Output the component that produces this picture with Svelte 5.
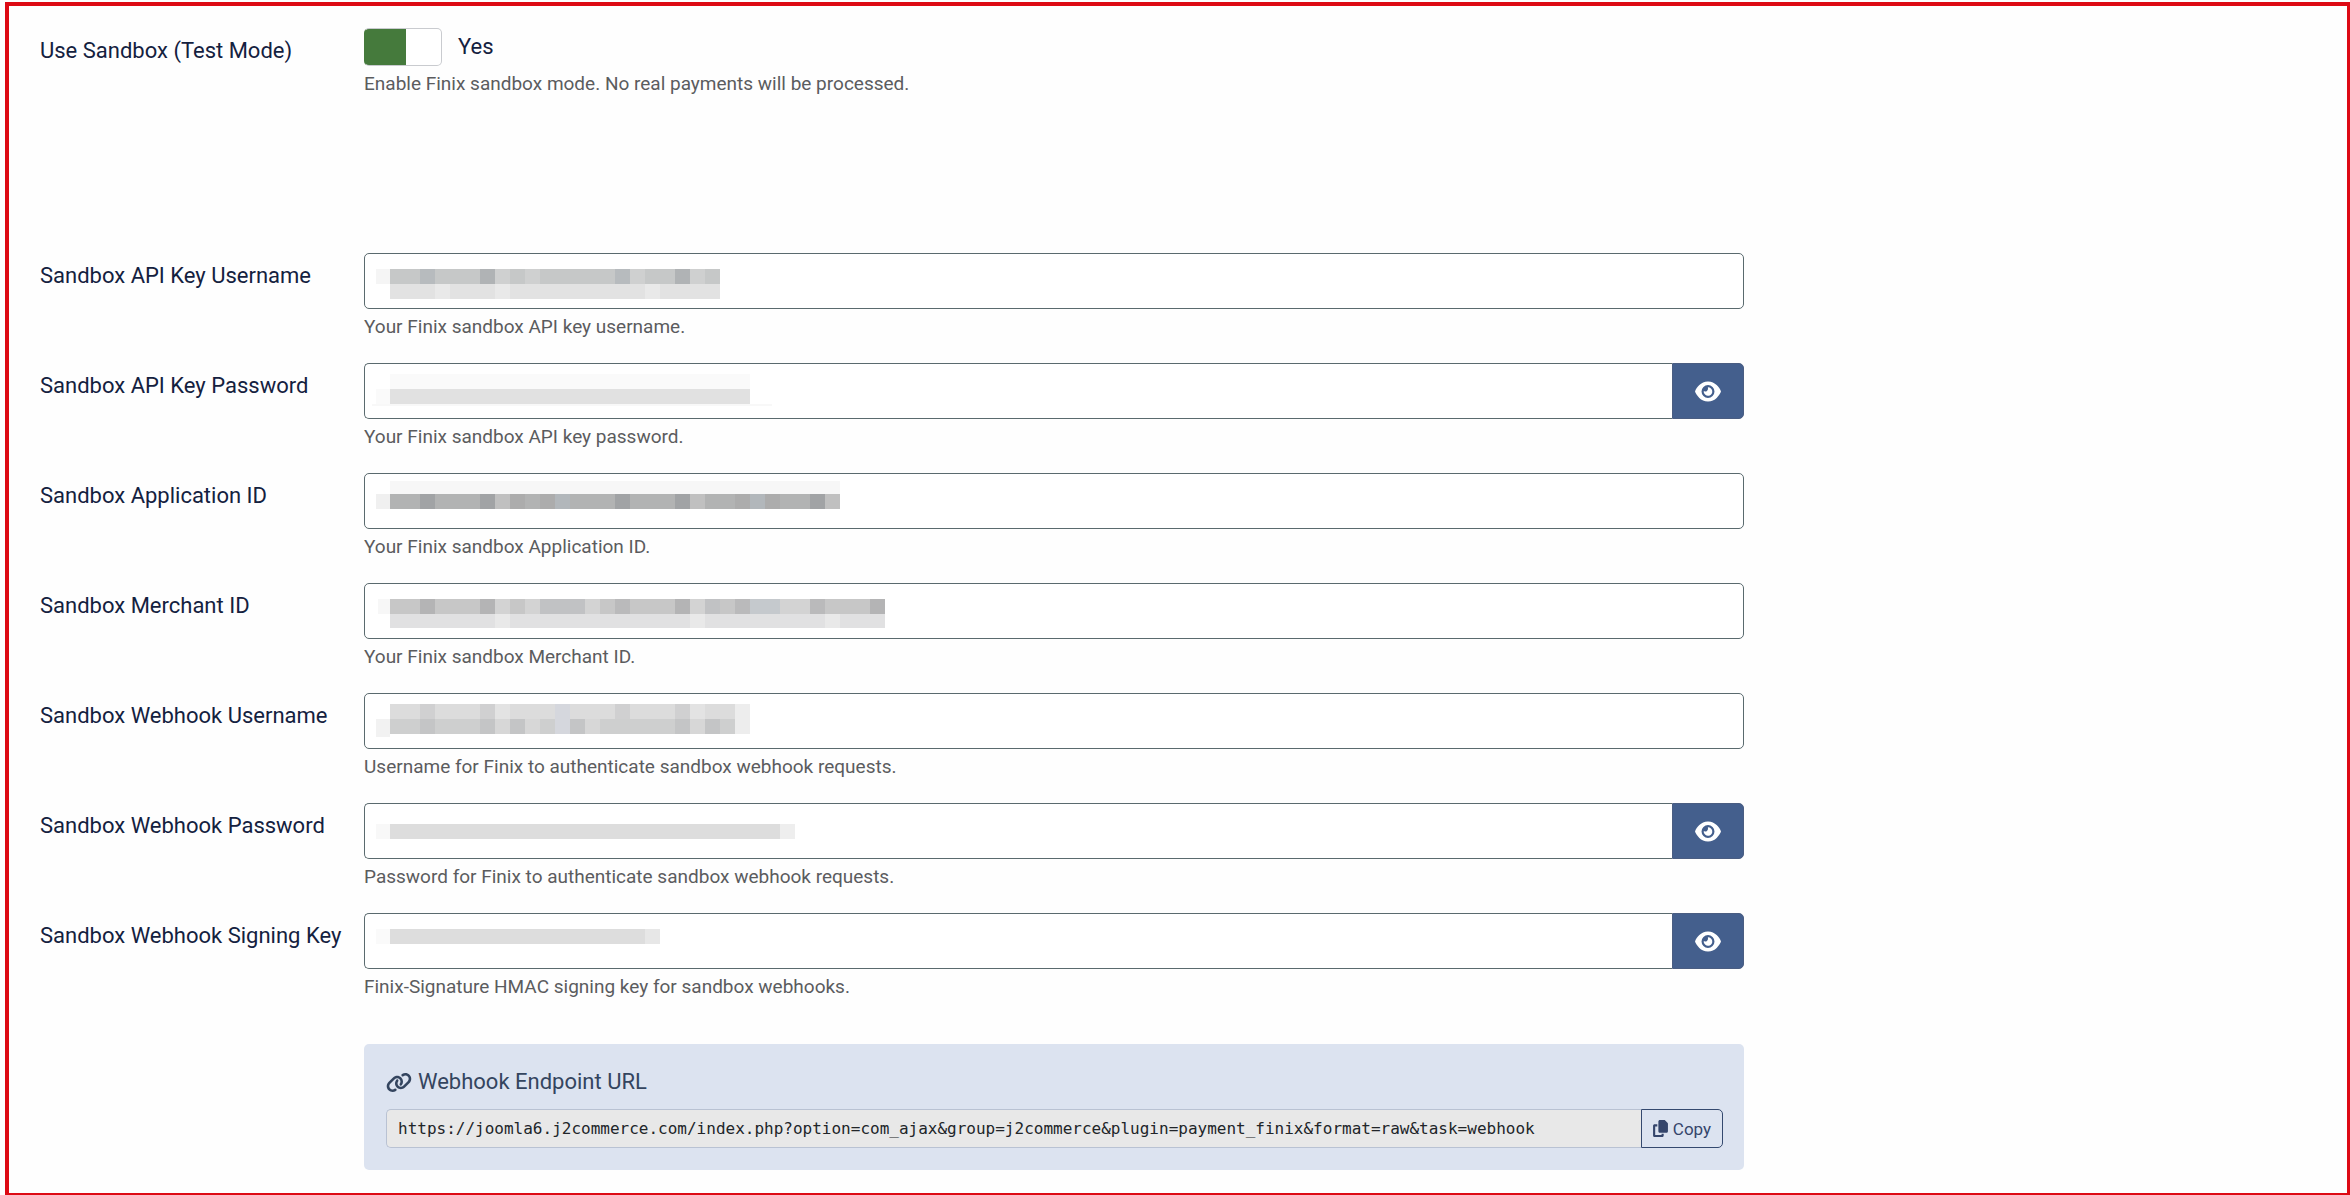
<script>
  let sandbox = $state(true);
  let copied = $state(false);
  let shown = $state({});

  const endpoint =
    'https://joomla6.j2commerce.com/index.php?option=com_ajax&group=j2commerce&plugin=payment_finix&format=raw&task=webhook';

  // Each mask is a list of tiles: [x, y, width, height, fill], relative to the field.
  const bar = (x, y, w, h, fill) => [x, y, w, h, fill];
  const tiles = (xs, y, h, fill) => xs.map((x) => [x, y, 15, h, fill]);

  const fields = [
    {
      id: 'api-user',
      label: 'Sandbox API Key Username',
      help: 'Your Finix sandbox API key username.',
      mask: [
        bar(12, 16, 14, 15, '#f5f5f5'),
        bar(26, 16, 330, 15, '#c6c8c8'),
        bar(26, 31, 330, 15, '#e2e2e2'),
        ...tiles([56, 251], 16, 15, '#b7bbbe'),
        ...tiles([116, 311], 16, 15, '#b0b3b5'),
        ...tiles([131, 161, 266, 326], 16, 15, '#cfd0d0'),
        ...tiles([71, 131, 281], 31, 15, '#e9e9e9')
      ]
    },
    {
      id: 'api-pass',
      label: 'Sandbox API Key Password',
      help: 'Your Finix sandbox API key password.',
      secret: true,
      mask: [
        bar(26, 11, 360, 15, '#fafafa'),
        bar(12, 26, 14, 15, '#fafafa'),
        bar(26, 26, 360, 15, '#e1e1e1'),
        bar(8, 41, 400, 2, '#f8f8f8')
      ]
    },
    {
      id: 'app-id',
      label: 'Sandbox Application ID',
      help: 'Your Finix sandbox Application ID.',
      mask: [
        bar(12, 21, 14, 15, '#f0f0f0'),
        bar(26, 8, 450, 13, '#f7f7f7'),
        bar(26, 21, 450, 15, '#b2b3b3'),
        ...tiles([56, 116, 251, 311, 446], 21, 15, '#a1a3a5'),
        ...tiles([131, 326, 461], 21, 15, '#c0c0c0'),
        ...tiles([146, 176, 371, 401], 21, 15, '#acacac'),
        ...tiles([191, 386], 21, 15, '#b2b7bb')
      ]
    },
    {
      id: 'merchant-id',
      label: 'Sandbox Merchant ID',
      help: 'Your Finix sandbox Merchant ID.',
      mask: [
        bar(14, 16, 12, 15, '#f7f7f7'),
        bar(26, 16, 495, 15, '#c7c7c7'),
        bar(26, 31, 495, 14, '#e1e1e2'),
        ...tiles([56, 116, 311, 506], 16, 15, '#b4b4b5'),
        ...tiles([251, 371, 446], 16, 15, '#bababb'),
        ...tiles([176, 191, 206, 341], 16, 15, '#c1c2c4'),
        ...tiles([386, 401], 16, 15, '#c5c9cd'),
        ...tiles([131, 161, 221, 326, 416, 431], 16, 15, '#d3d3d3'),
        ...tiles([131, 326, 461], 31, 14, '#e9e9e9')
      ]
    },
    {
      id: 'hook-user',
      label: 'Sandbox Webhook Username',
      help: 'Username for Finix to authenticate sandbox webhook requests.',
      mask: [
        bar(12, 26, 14, 18, '#f2f2f2'),
        bar(26, 11, 345, 15, '#dcdcdc'),
        bar(26, 26, 345, 15, '#cecfcf'),
        bar(371, 11, 15, 30, '#ededed'),
        ...tiles([56, 116, 251, 311], 11, 15, '#d0d0d1'),
        ...tiles([56, 116, 146, 206, 311, 341], 26, 15, '#c4c5c6'),
        ...tiles([131, 326], 11, 15, '#e3e3e3'),
        ...tiles([131, 161, 221, 326], 26, 15, '#d7d7d7'),
        bar(191, 11, 15, 30, '#d5d7dd')
      ]
    },
    {
      id: 'hook-pass',
      label: 'Sandbox Webhook Password',
      help: 'Password for Finix to authenticate sandbox webhook requests.',
      secret: true,
      mask: [
        bar(12, 21, 14, 15, '#f8f8f8'),
        bar(26, 21, 390, 15, '#dddddd'),
        bar(416, 21, 15, 15, '#eeeeee')
      ]
    },
    {
      id: 'hook-key',
      label: 'Sandbox Webhook Signing Key',
      help: 'Finix-Signature HMAC signing key for sandbox webhooks.',
      secret: true,
      mask: [
        bar(12, 16, 14, 15, '#fafafa'),
        bar(26, 16, 255, 15, '#dddddd'),
        bar(281, 16, 15, 15, '#e7e7e7')
      ]
    }
  ];

  function copy() {
    navigator.clipboard?.writeText(endpoint);
    copied = true;
  }
</script>

<main class="frame">
  <form class="form" onsubmit={(e) => e.preventDefault()}>
    <div class="row mode">
      <label class="label" for="sandbox">Use Sandbox (Test Mode)</label>
      <div class="control">
        <div class="switch-line">
          <input id="sandbox" class="switch" type="checkbox" role="switch" bind:checked={sandbox} aria-describedby="sandbox-help" />
          <span class="state">{sandbox ? 'Yes' : 'No'}</span>
        </div>
        <div class="help" id="sandbox-help">Enable Finix sandbox mode. No real payments will be processed.</div>
      </div>
    </div>

    {#each fields as f (f.id)}
      <div class="row">
        <label class="label" for={f.id}>{f.label}</label>
        <div class="control">
          <div class="group">
            <div class="field">
              <input
                id={f.id}
                class="input"
                class:joined={f.secret}
                type={f.secret && !shown[f.id] ? 'password' : 'text'}
                aria-describedby="{f.id}-help"
              />
              <svg class="mask" width="560" height="54" aria-hidden="true" shape-rendering="crispEdges">
                {#each f.mask as [x, y, w, h, fill]}
                  <rect {x} {y} width={w} height={h} {fill} />
                {/each}
              </svg>
            </div>
            {#if f.secret}
              <button class="reveal" type="button" aria-label="Show {f.label}" onclick={() => (shown[f.id] = !shown[f.id])}>
                <svg viewBox="0 0 576 512" width="26" height="23" fill="currentColor" aria-hidden="true">
                  <path d="M288 32c-80.8 0-145.5 36.8-192.6 80.6C48.6 156 17.3 208 2.5 243.7c-3.3 7.9-3.3 16.7 0 24.6C17.3 304 48.6 356 95.4 399.4C142.5 443.2 207.2 480 288 480s145.5-36.8 192.6-80.6c46.8-43.5 78.1-95.4 93-131.1c3.3-7.9 3.3-16.7 0-24.6c-14.9-35.7-46.2-87.7-93-131.1C433.5 68.8 368.8 32 288 32zM144 256a144 144 0 1 1 288 0 144 144 0 1 1 -288 0zm144-64c0 35.3-28.7 64-64 64c-7.1 0-13.9-1.2-20.3-3.3c-5.5-1.8-11.9 1.6-11.7 7.4c.3 6.9 1.3 13.8 3.2 20.7c13.7 51.2 66.4 81.6 117.6 67.9s81.6-66.4 67.9-117.6c-11.1-41.5-47.8-69.4-88.6-71.1c-5.8-.2-9.2 6.1-7.4 11.7c2.1 6.4 3.3 13.2 3.3 20.3z" />
                </svg>
              </button>
            {/if}
          </div>
          <div class="help" id="{f.id}-help">{f.help}</div>
        </div>
      </div>
    {/each}

    <section class="panel">
      <h2 class="title">
        <svg viewBox="0 0 640 512" width="26" height="21" fill="currentColor" aria-hidden="true">
          <path d="M579.8 267.7c56.5-56.5 56.5-148 0-204.5c-50-50-128.8-56.5-186.3-15.4l-1.6 1.1c-14.4 10.3-17.7 30.3-7.4 44.6s30.3 17.7 44.6 7.4l1.6-1.1c32.1-22.9 76-19.3 103.8 8.6c31.5 31.5 31.5 82.5 0 114L422.3 334.8c-31.5 31.5-82.5 31.5-114 0c-27.9-27.9-31.5-71.8-8.6-103.8l1.1-1.6c10.3-14.4 6.9-34.4-7.4-44.6s-34.4-6.9-44.6 7.4l-1.1 1.6C206.5 251.2 213 330 263 380c56.5 56.5 148 56.5 204.5 0L579.8 267.7zM60.2 244.3c-56.5 56.5-56.5 148 0 204.5c50 50 128.8 56.5 186.3 15.4l1.6-1.1c14.4-10.3 17.7-30.3 7.4-44.6s-30.3-17.7-44.6-7.4l-1.6 1.1c-32.1 22.9-76 19.3-103.8-8.6C74 372 74 321 105.5 289.5L217.7 177.2c31.5-31.5 82.5-31.5 114 0c27.9 27.9 31.5 71.8 8.6 103.9l-1.1 1.6c-10.3 14.4-6.9 34.4 7.4 44.6s34.4 6.9 44.6-7.4l1.1-1.6C433.5 260.8 427 182 377 132c-56.5-56.5-148-56.5-204.5 0L60.2 244.3z" />
        </svg>
        Webhook Endpoint URL
      </h2>
      <div class="group">
        <input class="url" type="text" readonly value={endpoint} aria-label="Webhook Endpoint URL" />
        <button class="copy" type="button" onclick={copy}>
          <svg viewBox="0 0 448 512" width="15" height="17" fill="currentColor" aria-hidden="true">
            <path d="M208 0H332.1c12.7 0 24.9 5.1 33.9 14.1l67.9 67.9c9 9 14.1 21.2 14.1 33.9V336c0 26.5-21.5 48-48 48H208c-26.5 0-48-21.5-48-48V48c0-26.5 21.5-48 48-48zM48 128h80v64H64V448H256V416h64v48c0 26.5-21.5 48-48 48H48c-26.5 0-48-21.5-48-48V176c0-26.5 21.5-48 48-48z" />
          </svg>
          {copied ? 'Copied' : 'Copy'}
        </button>
      </div>
    </section>
  </form>
</main>

<style>
  :global(body) {
    background: #fefefe;
  }

  .frame {
    box-sizing: border-box;
    min-height: calc(100vh - 2px);
    margin: 2px 0 0 5px;
    padding: 22px 20px 20px 31px;
    border: solid #dd0a14;
    border-width: 4px 3px 2px 4px;
    font-family: Roboto, 'Liberation Sans', sans-serif;
    font-size: 22px;
    line-height: 32px;
    color: #14213f;
  }

  .form {
    max-width: 1704px;
  }

  .row {
    display: grid;
    grid-template-columns: 324px minmax(0, 1fr);
    margin-bottom: 22px;
  }

  .mode {
    margin-bottom: 155px;
  }

  .label {
    padding-top: 7px;
    white-space: nowrap;
    justify-self: start;
    align-self: start;
  }

  .switch-line {
    display: flex;
    align-items: center;
    gap: 16px;
    height: 38px;
  }

  .switch {
    appearance: none;
    box-sizing: border-box;
    width: 78px;
    height: 38px;
    margin: 0;
    border: 1px solid #c9cbcf;
    border-radius: 5px;
    background: linear-gradient(to left, #b5b8bd 42px, #fff 42px);
    cursor: pointer;
  }

  .switch:checked {
    background: linear-gradient(to right, #457a3c 41px, #fff 41px);
    border-left-color: #457a3c;
  }

  .help {
    padding-top: 4px;
    font-size: 19px;
    line-height: 28px;
    color: #5b5c5e;
  }

  .group {
    display: flex;
  }

  .field {
    position: relative;
    flex: 1;
    min-width: 0;
  }

  .input {
    display: block;
    box-sizing: border-box;
    width: 100%;
    height: 56px;
    padding: 0 20px;
    border: 1px solid #5a6a6e;
    border-radius: 5px;
    background: #fff;
    font: inherit;
    color: inherit;
  }

  .joined {
    border-right: 0;
    border-radius: 5px 0 0 5px;
  }

  .mask {
    position: absolute;
    top: 0;
    left: 0;
    pointer-events: none;
  }

  .reveal {
    display: flex;
    align-items: center;
    justify-content: center;
    width: 72px;
    padding: 0;
    border: 1px solid #4a5d82;
    border-radius: 0 5px 5px 0;
    background: #445f8d;
    color: #fff;
    cursor: pointer;
  }

  .panel {
    margin: 43px 0 0 324px;
    padding: 22px 21px 22px 22px;
    border-radius: 5px;
    background: #dce3f0;
    color: #34455f;
  }

  .title {
    display: flex;
    align-items: center;
    gap: 6px;
    margin: 0 0 11px;
    font-size: 22px;
    font-weight: 400;
    line-height: 32px;
  }

  .url {
    flex: 1;
    min-width: 0;
    box-sizing: border-box;
    height: 39px;
    padding: 0 11px;
    border: 1px solid #b9c2d3;
    border-right: 0;
    border-radius: 5px 0 0 5px;
    background: #e8e8e8;
    font-family: 'DejaVu Sans Mono', 'Liberation Mono', monospace;
    font-size: 16px;
    color: #212529;
  }

  .copy {
    display: flex;
    align-items: center;
    justify-content: center;
    gap: 5px;
    width: 82px;
    padding: 0;
    border: 1px solid #34496f;
    border-radius: 0 5px 5px 0;
    background: transparent;
    font-family: inherit;
    font-size: 17px;
    color: #34456b;
    cursor: pointer;
  }
</style>
